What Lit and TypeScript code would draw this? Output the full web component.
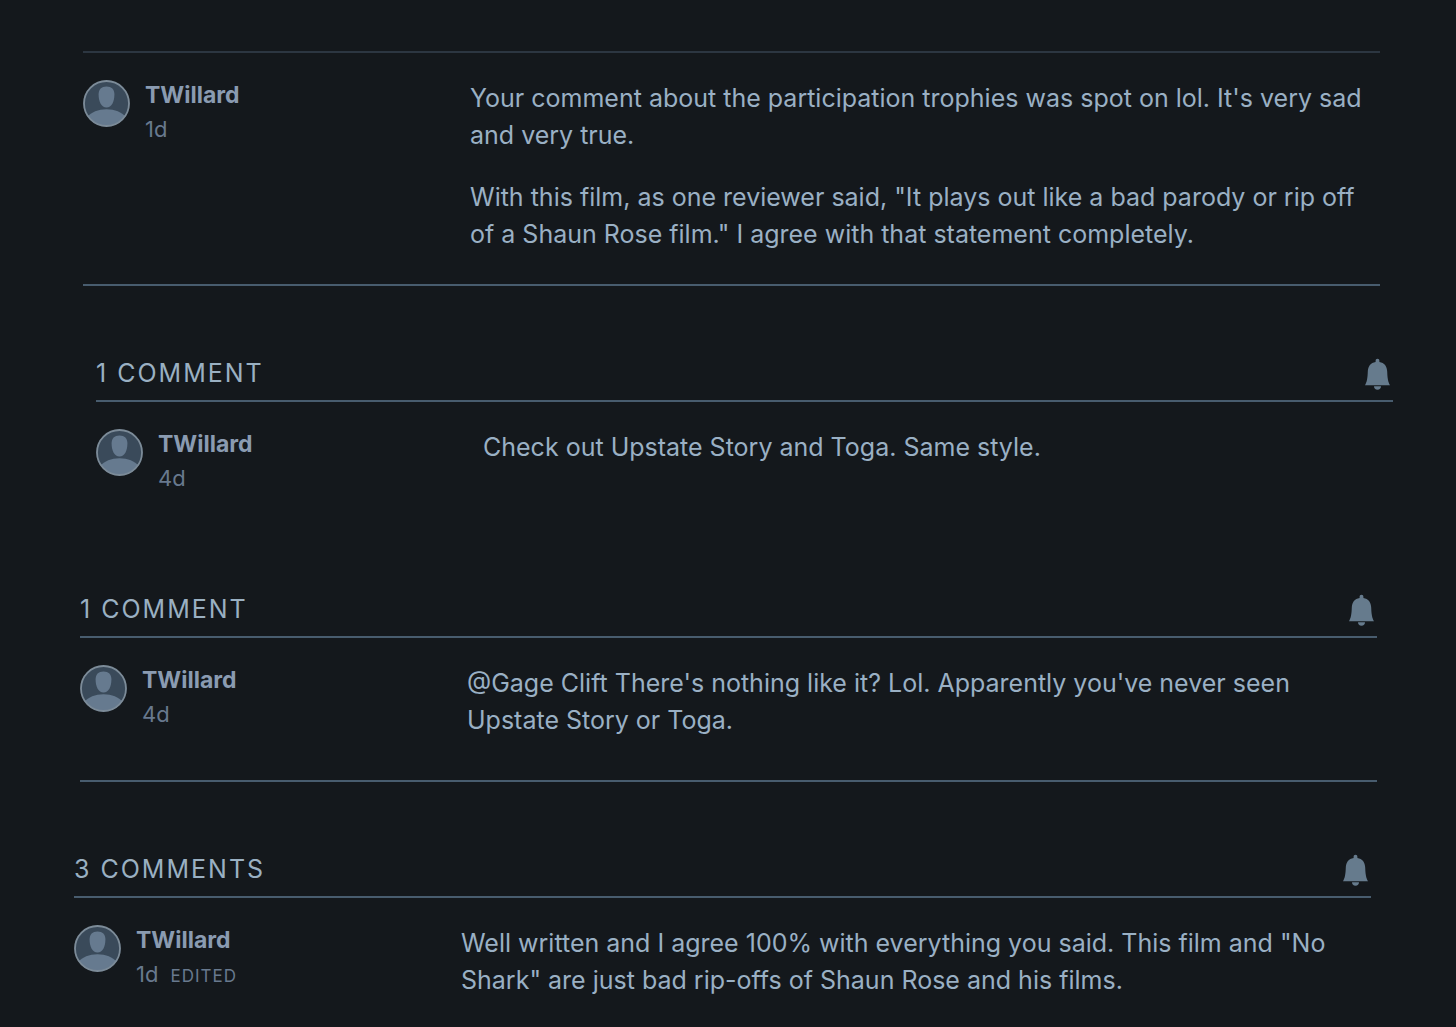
import { LitElement, html, css, nothing } from "lit";
import { customElement, property } from "lit/decorators.js";

interface Thread {
  id: string;
  heading?: string;
  time: string;
  edited?: boolean;
  paragraphs: string[];
}

const THREADS: Thread[] = [
  {
    id: "trophies",
    time: "1d",
    paragraphs: [
      "Your comment about the participation trophies was spot on lol. It's very sad and very true.",
      'With this film, as one reviewer said, "It plays out like a bad parody or rip off of a Shaun Rose film." I agree with that statement completely.',
    ],
  },
  {
    id: "style",
    heading: "1 Comment",
    time: "4d",
    paragraphs: ["Check out Upstate Story and Toga. Same style."],
  },
  {
    id: "reply",
    heading: "1 Comment",
    time: "4d",
    paragraphs: [
      "@Gage Clift There's nothing like it? Lol. Apparently you've never seen Upstate Story or Toga.",
    ],
  },
  {
    id: "ripoffs",
    heading: "3 Comments",
    time: "1d",
    edited: true,
    paragraphs: [
      'Well written and I agree 100% with everything you said. This film and "No Shark" are just bad rip-offs of Shaun Rose and his films.',
    ],
  },
];

@customElement("user-avatar")
export class UserAvatar extends LitElement {
  static styles = css`
    :host {
      display: block;
      flex: none;
    }
    .avatar {
      display: block;
      width: 47px;
      height: 47px;
    }
  `;

  render() {
    return html`
      <svg class="avatar" viewBox="0 0 47 47" aria-hidden="true">
        <defs>
          <clipPath id="disc"><circle cx="23.5" cy="23.5" r="22.5" /></clipPath>
        </defs>
        <circle cx="23.5" cy="23.5" r="23" fill="#3a4a5a" />
        <g clip-path="url(#disc)" fill="#667a8f">
          <path d="M23.5 6.5C28.6 6.5 31.4 9.2 31.4 14.6C31.4 21.8 28.6 27.6 23.5 27.6S15.6 21.8 15.6 14.6C15.6 9.2 18.4 6.5 23.5 6.5Z" />
          <path d="M4 47V37C8.5 32 15 29.2 23.5 29.2S38.5 32 43 37V47Z" />
        </g>
        <circle cx="23.5" cy="23.5" r="22.5" fill="none" stroke="#7c8b98" stroke-width="1.8" />
      </svg>
    `;
  }
}

@customElement("comment-thread")
export class CommentThread extends LitElement {
  @property({ attribute: false }) thread!: Thread;

  static styles = css`
    :host {
      display: block;
    }
    .header {
      display: flex;
      align-items: center;
      justify-content: space-between;
      height: 54px;
      border-bottom: 2px solid #485c6e;
    }
    .title {
      margin: 0;
      color: #9ab0c2;
      font-size: 25px;
      font-weight: 400;
      line-height: 32px;
      letter-spacing: 2px;
      text-transform: uppercase;
    }
    .bell {
      display: block;
      padding: 2px 2px 0 0;
      border: 0;
      background: none;
      color: #667b8d;
      cursor: pointer;
    }
    .bell svg {
      display: block;
      width: 27px;
      height: 32px;
    }
    .comment {
      display: grid;
      grid-template-columns: 387px minmax(0, 1fr);
      padding-top: 27px;
    }
    .person {
      display: flex;
      align-items: flex-start;
      gap: 15px;
    }
    .name {
      display: block;
      color: #8a9bb1;
      font-size: 23px;
      font-weight: 700;
      line-height: 30px;
      text-decoration: none;
    }
    .meta {
      display: flex;
      align-items: baseline;
      gap: 12px;
      margin: 0;
      color: #68798e;
      font-size: 22px;
      line-height: 38px;
    }
    .edited {
      font-size: 17px;
      letter-spacing: 1px;
      text-transform: uppercase;
    }
    .body {
      display: flex;
      flex-direction: column;
      gap: 25px;
      color: #9ab0c4;
      font-size: 25px;
      line-height: 37px;
    }
    .text {
      margin: 0;
    }
  `;

  render() {
    const { heading, time, edited, paragraphs } = this.thread;
    return html`
      ${heading
        ? html`<header class="header">
            <h2 class="title">${heading}</h2>
            <button class="bell" type="button" aria-label="Notifications">
              <svg viewBox="0 0 27 32" fill="currentColor" aria-hidden="true">
                <path d="M13.5 .8C14.7 .8 15.4 1.6 15.4 2.7V4C20.4 4.8 23 8.3 23.2 13.5C23.4 20 24 24 26 27.2H1C3 24 3.6 20 3.8 13.5C4 8.3 6.6 4.8 11.6 4V2.7C11.6 1.6 12.3 .8 13.5 .8Z" />
                <path d="M10 28.3H17C17 30.4 15.6 31.8 13.5 31.8S10 30.4 10 28.3Z" />
              </svg>
            </button>
          </header>`
        : nothing}
      <article class="comment">
        <div class="person">
          <user-avatar></user-avatar>
          <div>
            <a class="name" href="#">TWillard</a>
            <p class="meta">
              <time>${time}</time>
              ${edited ? html`<span class="edited">Edited</span>` : nothing}
            </p>
          </div>
        </div>
        <div class="body">
          ${paragraphs.map((p) => html`<p class="text">${p}</p>`)}
        </div>
      </article>
    `;
  }
}

@customElement("app-root")
export class AppRoot extends LitElement {
  static styles = css`
    :host {
      display: block;
      box-sizing: border-box;
      min-height: 100vh;
      padding-top: 51px;
      background: #14181c;
      font-family: Inter, "Liberation Sans", sans-serif;
    }
    .trophies {
      margin: 0 76px 0 83px;
      padding-bottom: 31px;
      border-top: 2px solid #2c3641;
      border-bottom: 2px solid #485c6e;
    }
    .style {
      margin: 60px 63px 0 96px;
    }
    .reply {
      margin: 85px 79px 0 80px;
      padding-bottom: 41px;
      border-bottom: 2px solid #485c6e;
    }
    .ripoffs {
      margin: 60px 85px 0 74px;
      padding-bottom: 24px;
    }
  `;

  render() {
    return html`
      <main>
        ${THREADS.map(
          (t) => html`<comment-thread class=${t.id} .thread=${t}></comment-thread>`
        )}
      </main>
    `;
  }
}
